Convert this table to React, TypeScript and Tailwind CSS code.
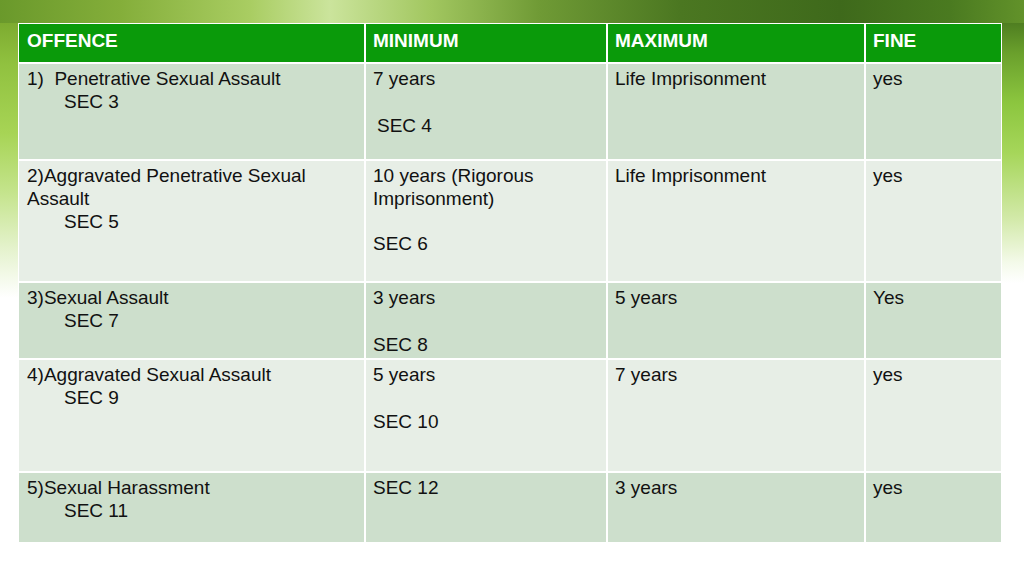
import React from "react";

type Row = {
  h: string;
  bg: string;
  c1: React.ReactNode;
  c2: React.ReactNode;
  c3: React.ReactNode;
  c4: React.ReactNode;
};

const Blank = () => <div className="h-[24px]" />;
const Ind = ({ children }: { children: React.ReactNode }) => (
  <div className="pl-[37px]">{children}</div>
);

const rows: Row[] = [
  {
    h: "h-[95px]",
    bg: "bg-[#cddfcc]",
    c1: (
      <>
        <div>
          1)&nbsp;&nbsp;Penetrative Sexual Assault
        </div>
        <Ind>SEC 3</Ind>
      </>
    ),
    c2: (
      <>
        <div>7 years</div>
        <Blank />
        <div className="pl-[4px]">SEC 4</div>
      </>
    ),
    c3: <div>Life Imprisonment</div>,
    c4: <div>yes</div>,
  },
  {
    h: "h-[120px]",
    bg: "bg-[#e7eee6]",
    c1: (
      <>
        <div>2)Aggravated Penetrative Sexual</div>
        <div>Assault</div>
        <Ind>SEC 5</Ind>
      </>
    ),
    c2: (
      <>
        <div>10 years (Rigorous</div>
        <div>Imprisonment)</div>
        <div className="h-[22px]" />
        <div>SEC 6</div>
      </>
    ),
    c3: <div>Life Imprisonment</div>,
    c4: <div>yes</div>,
  },
  {
    h: "h-[75px]",
    bg: "bg-[#cddfcc]",
    c1: (
      <>
        <div>3)Sexual Assault</div>
        <Ind>SEC 7</Ind>
      </>
    ),
    c2: (
      <>
        <div>3 years</div>
        <Blank />
        <div>SEC 8</div>
      </>
    ),
    c3: <div>5 years</div>,
    c4: <div>Yes</div>,
  },
  {
    h: "h-[111px]",
    bg: "bg-[#e7eee6]",
    c1: (
      <>
        <div>4)Aggravated Sexual Assault</div>
        <Ind>SEC 9</Ind>
      </>
    ),
    c2: (
      <>
        <div>5 years</div>
        <Blank />
        <div>SEC 10</div>
      </>
    ),
    c3: <div>7 years</div>,
    c4: <div>yes</div>,
  },
  {
    h: "h-[69px]",
    bg: "bg-[#cddfcc]",
    c1: (
      <>
        <div>5)Sexual Harassment</div>
        <Ind>SEC 11</Ind>
      </>
    ),
    c2: <div>SEC 12</div>,
    c3: <div>3 years</div>,
    c4: <div>yes</div>,
  },
];

export default function App() {
  return (
    <div
      className="w-[1024px] h-[576px] flex flex-col bg-white overflow-hidden"
      style={{ fontFamily: '"Liberation Sans", Arial, sans-serif' }}
    >
      <div className="h-[23px] shrink-0 bg-[linear-gradient(90deg,#6a992b_0px,#84ae3a_120px,#a9cd62_250px,#cbe49c_330px,#a2c760_430px,#6f9a35_540px,#4b7721_680px,#3e691b_840px,#4a7a20_950px,#62922a_1024px)]" />
      <div className="flex flex-row flex-1">
        <div className="w-[18px] shrink-0 bg-[linear-gradient(180deg,#7dab30_0px,#90c13f_40px,#a7d455_110px,#c5e48d_170px,#e4f2cc_225px,#ffffff_275px)]" />
        <div className="w-[984px] shrink-0 self-start">
          <div className="bg-white p-[1px] grid grid-cols-[345px_240px_256px_135px] gap-[2px] text-[19px] leading-[23px] text-[#111111]">
            {["OFFENCE", "MINIMUM", "MAXIMUM", "FINE"].map((t, i) => (
              <div
                key={t}
                className={`h-[38px] bg-[#0a9a0a] text-white font-bold pt-[5px] ${
                  i === 0 ? "pl-[8px]" : "pl-[7px]"
                }`}
              >
                {t}
              </div>
            ))}
            {rows.map((r, i) => (
              <React.Fragment key={i}>
                <div className={`${r.h} ${r.bg} pl-[8px] pt-[3px]`}>{r.c1}</div>
                <div className={`${r.h} ${r.bg} pl-[7px] pt-[3px]`}>{r.c2}</div>
                <div className={`${r.h} ${r.bg} pl-[7px] pt-[3px]`}>{r.c3}</div>
                <div className={`${r.h} ${r.bg} pl-[7px] pt-[3px]`}>{r.c4}</div>
              </React.Fragment>
            ))}
          </div>
        </div>
        <div className="flex-1 bg-[linear-gradient(180deg,#4f7e21_0px,#6aa02c_30px,#8cc63f_80px,#a6d65a_130px,#d2e9a8_195px,#f4faea_240px,#ffffff_260px)]" />
      </div>
    </div>
  );
}
